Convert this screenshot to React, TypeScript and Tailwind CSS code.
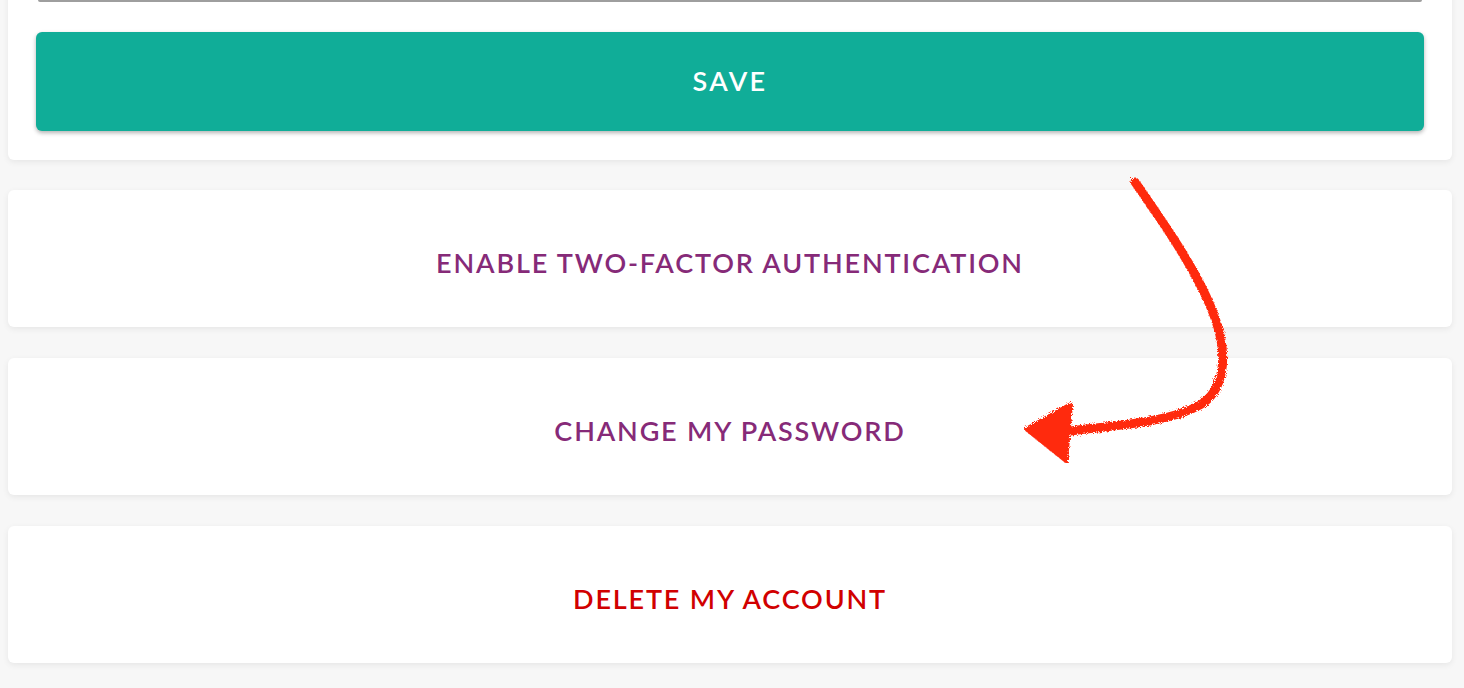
import React from 'react'

const font = { fontFamily: 'Lato, "Open Sans", sans-serif' }

function ActionCard({ label, color }: { label: string; color: string }) {
  return (
    <div className="flex h-[137px] items-center justify-center rounded-[6px] bg-white pt-[9px] shadow-[0_2px_6px_rgba(0,0,0,0.07)]">
      <button
        className={`text-[27px] font-semibold uppercase tracking-[0.068em] ${color}`}
      >
        {label}
      </button>
    </div>
  )
}

function Arrow() {
  return (
    <svg
      className="pointer-events-none absolute left-0 top-0"
      width="1464"
      height="688"
      viewBox="0 0 1464 688"
    >
      <defs>
        <filter id="chalk" x="-10%" y="-10%" width="120%" height="120%">
          <feTurbulence type="fractalNoise" baseFrequency="1.2" numOctaves="2" result="n" />
          <feDisplacementMap in="SourceGraphic" in2="n" scale="5" />
        </filter>
      </defs>
      <g filter="url(#chalk)" fill="#ff2a10" stroke="#ff2a10" strokeLinecap="round" strokeLinejoin="round">
        <path
          d="M1135 182 C1165 225 1200 275 1215 318 C1230 360 1222 392 1200 405 C1170 422 1120 425 1070 431"
          fill="none"
          strokeWidth="9"
        />
        <path d="M1026 429 L1071 404 L1066 461 Z" strokeWidth="4" />
      </g>
    </svg>
  )
}

export default function App() {
  return (
    <div className="relative min-h-[688px] overflow-hidden bg-[#f7f7f7] pl-2 pr-3" style={font}>
      <div className="-mt-[40px] rounded-[6px] bg-white px-[28px] pb-[29px] shadow-[0_2px_6px_rgba(0,0,0,0.07)]">
        <div className="mx-[2px] h-[42px] border-b-2 border-[#9e9e9e] rounded-b-[2px]" />
        <button className="mt-[30px] flex h-[99px] w-full items-center justify-center rounded-[6px] bg-[#10ad98] text-[27px] font-semibold uppercase tracking-[0.09em] text-white shadow-[0_2px_4px_rgba(0,0,0,0.3)]">
          Save
        </button>
      </div>
      <div className="mt-[30px] flex flex-col gap-[31px] pb-6">
        <ActionCard label="Enable two-factor authentication" color="text-[#862a78]" />
        <ActionCard label="Change my password" color="text-[#862a78]" />
        <ActionCard label="Delete my account" color="text-[#d10000]" />
      </div>
      <Arrow />
    </div>
  )
}
